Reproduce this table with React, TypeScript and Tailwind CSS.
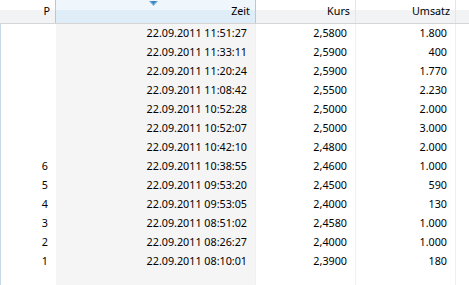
import React from "react";

type Row = { p: string; zeit: string; kurs: string; umsatz: string };

const rows: Row[] = [
  { p: "", zeit: "22.09.2011 11:51:27", kurs: "2,5800", umsatz: "1.800" },
  { p: "", zeit: "22.09.2011 11:33:11", kurs: "2,5900", umsatz: "400" },
  { p: "", zeit: "22.09.2011 11:20:24", kurs: "2,5900", umsatz: "1.770" },
  { p: "", zeit: "22.09.2011 11:08:42", kurs: "2,5500", umsatz: "2.230" },
  { p: "", zeit: "22.09.2011 10:52:28", kurs: "2,5000", umsatz: "2.000" },
  { p: "", zeit: "22.09.2011 10:52:07", kurs: "2,5000", umsatz: "3.000" },
  { p: "", zeit: "22.09.2011 10:42:10", kurs: "2,4800", umsatz: "2.000" },
  { p: "6", zeit: "22.09.2011 10:38:55", kurs: "2,4600", umsatz: "1.000" },
  { p: "5", zeit: "22.09.2011 09:53:20", kurs: "2,4500", umsatz: "590" },
  { p: "4", zeit: "22.09.2011 09:53:05", kurs: "2,4000", umsatz: "130" },
  { p: "3", zeit: "22.09.2011 08:51:02", kurs: "2,4580", umsatz: "1.000" },
  { p: "2", zeit: "22.09.2011 08:26:27", kurs: "2,4000", umsatz: "1.000" },
  { p: "1", zeit: "22.09.2011 08:10:01", kurs: "2,3900", umsatz: "180" },
];

// plain header cell, white-to-grey like the old list view
function HeaderCell({ label, className }: { label: string; className: string }) {
  return (
    <div
      className={`h-full flex items-center justify-end pr-[5px] border-r bg-gradient-to-b from-[#ffffff] from-45% to-[#f2f3f5] to-45% ${className}`}
    >
      {label}
    </div>
  );
}

function Column({ values, className }: { values: string[]; className: string }) {
  return (
    <div className={`flex flex-col border-r border-[#eef0f3] ${className}`}>
      {values.map((v, i) => (
        <div key={i} className="h-[19px] flex items-center justify-end pr-[8px] whitespace-nowrap">
          {v}
        </div>
      ))}
    </div>
  );
}

export default function App() {
  return (
    <div
      className="w-[469px] h-[285px] bg-white text-[10.75px] text-black flex flex-col overflow-hidden"
      style={{ fontFamily: '"Noto Sans", "Open Sans", sans-serif' }}
    >
      {/* header */}
      <div className="h-[24px] flex border-b border-[#d5d5d5] shrink-0">
        <HeaderCell label="P" className="w-[56px] border-[#9ad2ef]" />
        <div className="relative w-[200px] h-full flex items-center justify-end pr-[5px] border-r border-[#9ad2ef] bg-gradient-to-b from-[#f0f7fc] from-45% to-[#deedf8] to-45%">
          <svg className="absolute left-[93px] top-[1px]" width="9" height="5" viewBox="0 0 9 5">
            <path d="M0 0 H9 L4.5 5 Z" fill="#6aa9d6" />
            <path d="M2 0 H7 L4.5 3 Z" fill="#3d7fb8" />
          </svg>
          Zeit
        </div>
        <HeaderCell label="Kurs" className="w-[100px] border-[#e3e5e8]" />
        <HeaderCell label="Umsatz" className="w-[100px] border-[#e3e5e8]" />
        <div className="flex-1 h-full bg-gradient-to-b from-[#ffffff] from-45% to-[#f2f3f5] to-45%" />
      </div>

      {/* body */}
      <div className="flex-1 flex">
        <div className="w-[56px] flex flex-col border-l border-[#c9d9ec]">
          {rows.map((r, i) => (
            <div key={i} className="h-[19px] flex items-center justify-end pr-[8px]">
              {r.p}
            </div>
          ))}
        </div>
        <Column values={rows.map((r) => r.zeit)} className="w-[200px] bg-[#f5f5f5]" />
        <Column values={rows.map((r) => r.kurs)} className="w-[100px]" />
        <Column values={rows.map((r) => r.umsatz)} className="w-[100px]" />
        <div className="flex-1" />
      </div>
    </div>
  );
}
